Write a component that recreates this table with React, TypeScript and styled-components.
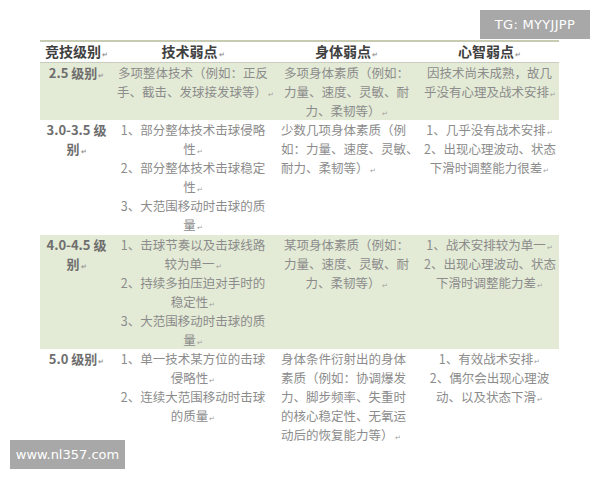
import { Fragment } from 'react';
import styled, { createGlobalStyle } from 'styled-components';

const GlobalStyle = createGlobalStyle`
  html, body {
    margin: 0;
    padding: 0;
    background: #ffffff;
  }
  body {
    font-family: "Noto Sans CJK SC", "Noto Sans", sans-serif;
  }
`;

const Page = styled.div`
  position: relative;
  width: 600px;
  height: 480px;
  overflow: hidden;
  padding: 40px 0 0 40px;
  box-sizing: border-box;
`;

const Table = styled.div`
  width: 519px;
  display: grid;
  grid-template-columns: 73px 160px 147px 139px;
  border-top: 2px solid #c6cbb2;
`;

const HeadCell = styled.div`
  height: 20px;
  line-height: 19px;
  text-align: center;
  font-size: 14px;
  font-weight: 700;
  color: #404040;
  border-bottom: 1px solid #c9ccbf;
  white-space: nowrap;
`;

const Cell = styled.div<{ $tint: boolean; $height: number; $align?: string; $pad?: number }>`
  height: ${p => p.$height}px;
  box-sizing: border-box;
  padding: 0 ${p => p.$pad ?? 4}px;
  background: ${p => (p.$tint ? '#e3ead5' : '#ffffff')};
  text-align: ${p => p.$align ?? 'center'};
  font-size: 12.5px;
  line-height: 19px;
  color: #8c8c8c;
  white-space: nowrap;
`;

const LevelCell = styled(Cell)`
  font-weight: 700;
  color: #6e6e6e;
  font-size: 13px;
`;

const Line = styled.div`
  height: 19px;
`;

const Mark = styled.span`
  font-size: 7px;
  line-height: 0;
  color: #a0a0a0;
  margin-left: 1px;
`;

const Badge = styled.div`
  position: absolute;
  background: #a8a8a8;
  color: #ffffff;
  font-family: "DejaVu Sans", "Liberation Sans", sans-serif;
  font-size: 13px;
  display: flex;
  align-items: center;
  justify-content: center;
`;

const TopBadge = styled(Badge)`
  top: 10px;
  left: 480px;
  width: 110px;
  height: 29px;
  letter-spacing: 0.3px;
`;

const BottomBadge = styled(Badge)`
  top: 440px;
  left: 10px;
  width: 115px;
  height: 29px;
`;

type Para = string[];

interface RowData {
  level: string[];
  height: number;
  tint: boolean;
  tech: Para[];
  body: Para[];
  bodyAlign?: string;
  mind: Para[];
}

const rows: RowData[] = [
  {
    level: ['2.5 级别'],
    height: 57,
    tint: true,
    tech: [['多项整体技术（例如：正反', '手、截击、发球接发球等）']],
    body: [['多项身体素质（例如：', '力量、速度、灵敏、耐', '力、柔韧等）']],
    mind: [['因技术尚未成熟，故几', '乎没有心理及战术安排']],
  },
  {
    level: ['3.0-3.5 级', '别'],
    height: 115,
    tint: false,
    tech: [
      ['1、部分整体技术击球侵略', '性'],
      ['2、部分整体技术击球稳定', '性'],
      ['3、大范围移动时击球的质', '量'],
    ],
    body: [['少数几项身体素质（例', '如：力量、速度、灵敏、', ' 耐力、柔韧等）']],
    bodyAlign: 'left',
    mind: [['1、几乎没有战术安排'], ['2、出现心理波动、状态', '下滑时调整能力很差']],
  },
  {
    level: ['4.0-4.5 级', '别'],
    height: 114,
    tint: true,
    tech: [
      ['1、击球节奏以及击球线路', '较为单一'],
      ['2、持续多拍压迫对手时的', '稳定性'],
      ['3、大范围移动时击球的质', '量'],
    ],
    body: [['某项身体素质（例如：', '力量、速度、灵敏、耐', '力、柔韧等）']],
    mind: [['1、战术安排较为单一'], ['2、出现心理波动、状态', '下滑时调整能力差']],
  },
  {
    level: ['5.0 级别'],
    height: 140,
    tint: false,
    tech: [
      ['1、单一技术某方位的击球', '侵略性'],
      ['2、连续大范围移动时击球', '的质量'],
    ],
    body: [['身体条件衍射出的身体', '素质（例如：协调爆发', '力、脚步频率、失重时', '的核心稳定性、无氧运', ' 动后的恢复能力等）']],
    bodyAlign: 'left',
    mind: [['1、有效战术安排'], ['2、偶尔会出现心理波', '动、以及状态下滑']],
  },
];

const Paras = ({ paras }: { paras: Para[] }) => (
  <>
    {paras.map((para, i) =>
      para.map((line, j) => (
        <Line key={`${i}-${j}`}>
          {line}
          {j === para.length - 1 && <Mark>↵</Mark>}
        </Line>
      )),
    )}
  </>
);

export default function App() {
  return (
    <>
      <GlobalStyle />
      <Page>
        <Table>
          <HeadCell>竞技级别<Mark>↵</Mark></HeadCell>
          <HeadCell>技术弱点<Mark>↵</Mark></HeadCell>
          <HeadCell>身体弱点<Mark>↵</Mark></HeadCell>
          <HeadCell>心智弱点<Mark>↵</Mark></HeadCell>
          {rows.map((r, idx) => (
            <Fragment key={idx}>
              <LevelCell $tint={r.tint} $height={r.height}>
                <Paras paras={[r.level]} />
              </LevelCell>
              <Cell $tint={r.tint} $height={r.height}>
                <Paras paras={r.tech} />
              </Cell>
              <Cell $tint={r.tint} $height={r.height} $align={r.bodyAlign} $pad={8}>
                <Paras paras={r.body} />
              </Cell>
              <Cell $tint={r.tint} $height={r.height}>
                <Paras paras={r.mind} />
              </Cell>
            </Fragment>
          ))}
        </Table>
        <TopBadge>TG: MYYJJPP</TopBadge>
        <BottomBadge>www.nl357.com</BottomBadge>
      </Page>
    </>
  );
}
